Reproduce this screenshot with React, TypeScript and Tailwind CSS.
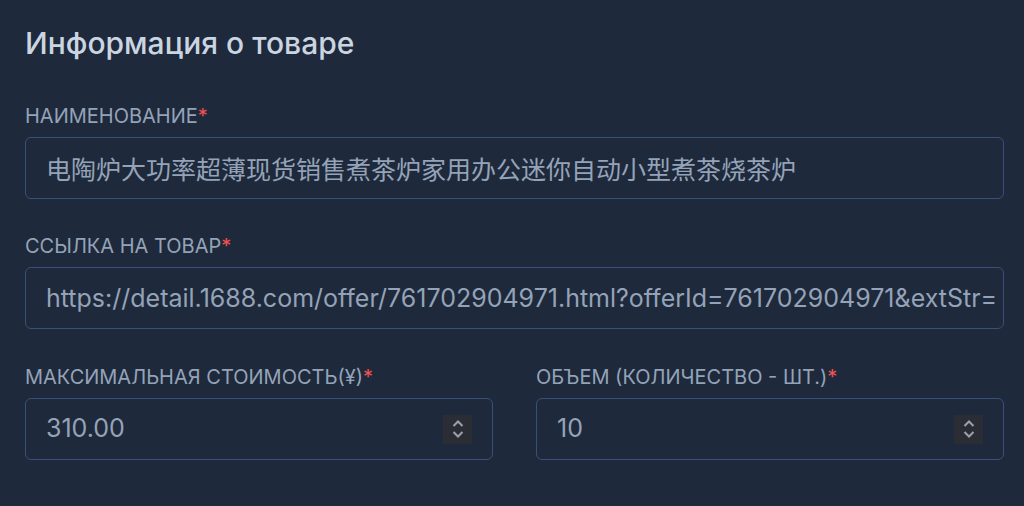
import React from 'react';

function Label({ children }: { children: React.ReactNode }) {
    return (
        <label className="block text-xl leading-7 uppercase text-[#94a3b8] mb-[7px]">
            {children}
            <span className="text-[#f05252]">*</span>
        </label>
    );
}

function Spinner() {
    return (
        <div className="w-[29px] h-[29px] bg-[#2b2d35] flex flex-col items-center justify-center gap-[4px]">
            <svg width="12" height="7" viewBox="0 0 12 7" fill="none" stroke="#9ca0ab" strokeWidth={2}>
                <polyline points="1.5,6 6,1.5 10.5,6" />
            </svg>
            <svg width="12" height="7" viewBox="0 0 12 7" fill="none" stroke="#9ca0ab" strokeWidth={2}>
                <polyline points="1.5,1 6,5.5 10.5,1" />
            </svg>
        </div>
    );
}

function TextField({ value }: { value: string }) {
    return (
        <input
            readOnly
            value={value}
            className="w-full h-[62px] pl-5 pr-[3px] rounded-md border border-[#3b5078] bg-[#1e293b] text-[25px] text-[#94a3b8] outline-none"
        />
    );
}

function NumberField({ value }: { value: string }) {
    return (
        <div className="flex items-center h-[62px] pl-5 pr-5 rounded-md border border-[#3b5078] bg-[#1e293b]">
            <span className="flex-1 text-[25px] text-[#94a3b8]">{value}</span>
            <Spinner />
        </div>
    );
}

export default function App() {
    return (
        <div
            className="min-h-[506px] w-full bg-[#1e293b] pl-[25px] pr-[20px] pt-[25px]"
            style={{ fontFamily: "Inter, 'Noto Sans CJK SC', sans-serif" }}
        >
            <h2 className="text-3xl leading-9 font-medium text-[#cbd5e1] mb-[41px]">Информация о товаре</h2>

            <Label>Наименование</Label>
            <TextField value="电陶炉大功率超薄现货销售煮茶炉家用办公迷你自动小型煮茶烧茶炉" />

            <div className="mt-[33px]">
                <Label>Ссылка на товар</Label>
                <TextField value="https://detail.1688.com/offer/761702904971.html?offerId=761702904971&extStr=" />
            </div>

            <div className="mt-[34px] grid grid-cols-2 gap-[43px]">
                <div>
                    <Label>Максимальная стоимость(¥)</Label>
                    <NumberField value="310.00" />
                </div>
                <div>
                    <Label>Объем (количество - шт.)</Label>
                    <NumberField value="10" />
                </div>
            </div>
        </div>
    );
}
